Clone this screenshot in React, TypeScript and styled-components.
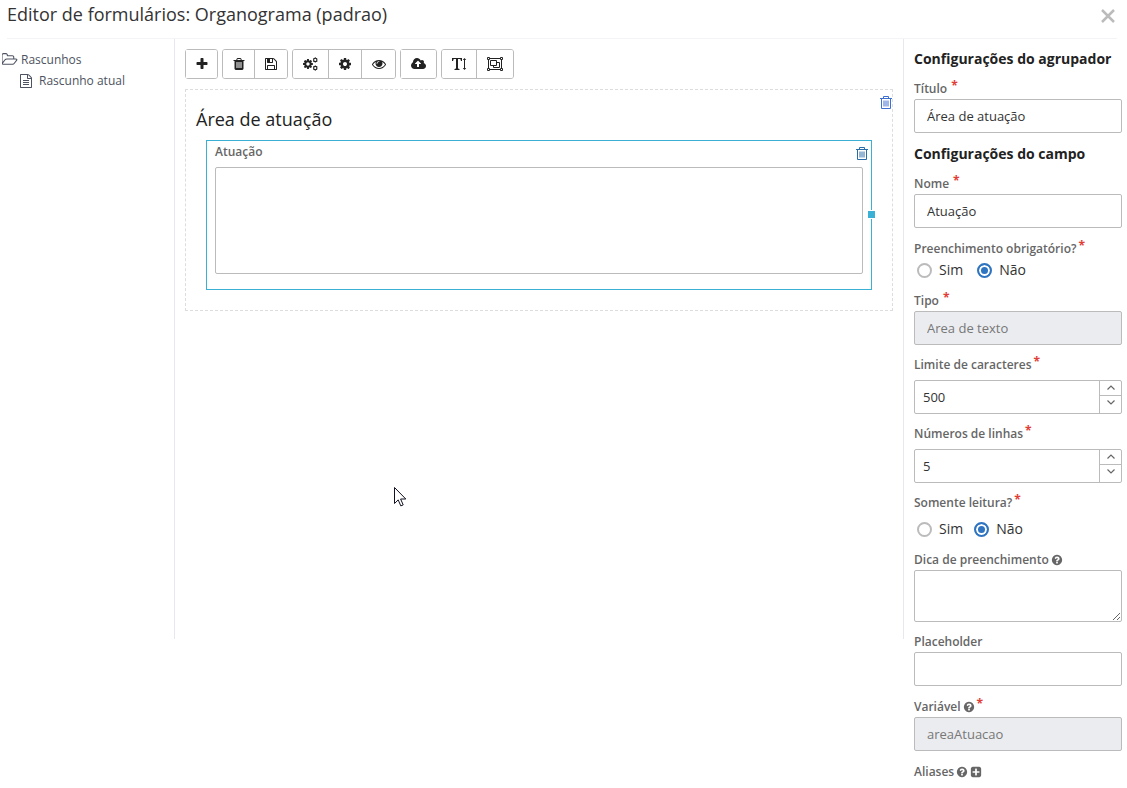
import React from "react";
import styled, { createGlobalStyle, css } from "styled-components";

const colors = {
  text: "#333",
  strong: "#222",
  muted: "#666",
  tree: "#4d5360",
  line: "#e6e7ef",
  control: "#bbb",
  accent: "#3ab0d5",
  blue: "#2f74c0",
  required: "#e03e36",
};

const GlobalStyle = createGlobalStyle`
  * { box-sizing: border-box; }
  body {
    margin: 0;
    background: #fff;
    color: ${colors.text};
    font-family: "Open Sans", "Noto Sans", sans-serif;
    font-size: 14px;
  }
  button, input, textarea { font: inherit; color: inherit; }
`;

/* ---------- icons ---------- */

const Svg = styled.svg`
  display: block;
  flex: none;
  fill: currentColor;
`;

const paths = {
  plus: "M1600 736v192q0 40-28 68t-68 28h-416v416q0 40-28 68t-68 28h-192q-40 0-68-28t-28-68v-416h-416q-40 0-68-28t-28-68v-192q0-40 28-68t68-28h416v-416q0-40 28-68t68-28h192q40 0 68 28t28 68v416h416q40 0 68 28t28 68z",
  trash:
    "M704 1376v-704q0-14-9-23t-23-9h-64q-14 0-23 9t-9 23v704q0 14 9 23t23 9h64q14 0 23-9t9-23zm256 0v-704q0-14-9-23t-23-9h-64q-14 0-23 9t-9 23v704q0 14 9 23t23 9h64q14 0 23-9t9-23zm256 0v-704q0-14-9-23t-23-9h-64q-14 0-23 9t-9 23v704q0 14 9 23t23 9h64q14 0 23-9t9-23zm-544-992h448l-48-117q-7-9-17-11h-317q-10 2-17 11zm928 32v64q0 14-9 23t-23 9h-96v948q0 83-47 143.500t-113 60.500h-832q-66 0-113-58.500t-47-141.500v-952h-96q-14 0-23-9t-9-23v-64q0-14 9-23t23-9h309l70-167q15-37 54-63t79-26h320q40 0 79 26t54 63l70 167h309q14 0 23 9t9 23z",
  save: "M512 1536h768v-384h-768v384zm896 0h128v-896q0-14-10-38.500t-20-34.500l-281-281q-10-10-34-20t-39-10v416q0 40-28 68t-68 28h-576q-40 0-68-28t-28-68v-416h-128v1280h128v-416q0-40 28-68t68-28h832q40 0 68 28t28 68v416zm-384-928v-320q0-13-9.500-22.500t-22.500-9.500h-192q-13 0-22.500 9.500t-9.500 22.500v320q0 13 9.500 22.500t22.500 9.500h192q13 0 22.500-9.500t9.500-22.500zm640 32v928q0 40-28 68t-68 28h-1344q-40 0-68-28t-28-68v-1344q0-40 28-68t68-28h928q40 0 88 20t76 48l280 280q28 28 48 76t20 88z",
  cog: "M1152 896q0-106-75-181t-181-75-181 75-75 181 75 181 181 75 181-75 75-181zm512-109v222q0 12-8 23t-20 13l-185 28q-19 54-39 91 35 50 107 138 10 12 10 25t-9 23q-27 37-99 108t-94 71q-12 0-26-9l-138-108q-44 23-91 38-16 136-29 186-7 28-36 28h-222q-14 0-24.500-8.500t-11.500-21.500l-28-184q-49-16-90-37l-141 107q-10 9-25 9-14 0-25-11-126-114-165-168-7-10-7-23 0-12 8-23 15-21 51-66.500t54-70.500q-27-50-41-99l-183-27q-13-2-21-12.500t-8-23.500v-222q0-12 8-23t19-13l186-28q14-46 39-92-40-57-107-138-10-12-10-24 0-10 9-23 26-36 98.500-107.500t94.500-71.500q13 0 26 10l138 107q44-23 91-38 16-136 29-186 7-28 36-28h222q14 0 24.500 8.500t11.500 21.500l28 184q49 16 90 37l142-107q9-9 24-9 13 0 25 10 129 119 165 170 7 8 7 22 0 12-8 23-15 21-51 66.500t-54 70.500q26 50 41 98l183 28q13 2 21 12.500t8 23.500z",
  eye: "M1664 960q-152-236-381-353 61 104 61 225 0 185-131.500 316.500t-316.500 131.500-316.500-131.500-131.500-316.500q0-121 61-225-229 117-381 353 133 205 333.500 326.500t434.500 121.500 434.500-121.500 333.500-326.500zm-720-384q0-20-14-34t-34-14q-125 0-214.500 89.500t-89.500 214.500q0 20 14 34t34 14 34-14 14-34q0-86 61-147t147-61q20 0 34-14t14-34zm848 384q0 34-20 69-140 230-376.500 368.500t-499.500 138.500-499.500-139-376.500-368q-20-35-20-69t20-69q140-229 376.500-368t499.500-139 499.500 139 376.500 368q20 35 20 69z",
  cloud:
    "M1280 864q0-14-9-23l-352-352q-9-9-23-9t-23 9l-351 351q-10 12-10 24 0 14 9 23t23 9h224v352q0 13 9.500 22.500t22.500 9.500h192q13 0 22.500-9.500t9.500-22.500v-352h224q13 0 22.500-9.500t9.500-22.500zm640 288q0 159-112.500 271.500t-271.500 112.500h-1088q-185 0-316.500-131.500t-131.500-316.500q0-130 70-240t188-165q-2-30-2-43 0-212 150-362t362-150q156 0 285.500 87t188.500 231q71-62 166-62 106 0 181 75t75 181q0 76-41 138 130 31 213.500 135.500t83.500 238.500z",
  question:
    "M1024 1376v-192q0-14-9-23t-23-9h-192q-14 0-23 9t-9 23v192q0 14 9 23t23 9h192q14 0 23-9t9-23zm256-672q0-88-55.500-163t-138.500-116-170-41q-243 0-371 213-15 24 8 42l132 100q7 6 19 6 16 0 25-12 53-68 86-92 34-24 86-24 48 0 85.500 26t37.500 59q0 38-20 61t-68 45q-63 28-115.500 86.500t-52.500 125.500v36q0 14 9 23t23 9h192q14 0 23-9t9-23q0-19 21.500-49.500t54.500-49.500q32-18 49-28.500t46-35 44.500-48 28-60.500 12.500-81zm384 192q0 209-103 385.500t-279.500 279.500-385.500 103-385.500-103-279.500-279.500-103-385.500 103-385.500 279.500-279.500 385.500-103 385.500 103 279.500 279.500 103 385.500z",
  plusSquare:
    "M1408 960v-128q0-26-19-45t-45-19h-320v-320q0-26-19-45t-45-19h-128q-26 0-45 19t-19 45v320h-320q-26 0-45 19t-19 45v128q0 26 19 45t45 19h320v320q0 26 19 45t45 19h128q26 0 45-19t19-45v-320h320q26 0 45-19t19-45zm256-544v960q0 119-84.500 203.500t-203.500 84.500h-960q-119 0-203.500-84.500t-84.500-203.500v-960q0-119 84.500-203.500t203.500-84.500h960q119 0 203.500 84.500t84.500 203.500z",
  folder:
    "M1717 931q0-35-53-35h-1088q-40 0-85.500 21.500t-71.500 52.500l-294 363q-18 24-18 40 0 35 53 35h1088q40 0 86-22t71-53l294-363q18-22 18-39zm-1141-163h768v-160q0-40-28-68t-68-28h-576q-40 0-68-28t-28-68v-64q0-40-28-68t-68-28h-320q-40 0-68 28t-28 68v853l256-315q44-53 116-87.500t140-34.500zm1269 163q0 62-46 120l-295 363q-43 53-116 87.500t-140 34.500h-1088q-92 0-158-66t-66-158v-960q0-92 66-158t158-66h320q92 0 158 66t66 158v32h544q92 0 158 66t66 158v160h192q54 0 99 24.500t67 70.500q15 32 15 68z",
  file: "M1596 380q28 28 48 76t20 88v1152q0 40-28 68t-68 28h-1344q-40 0-68-28t-28-68v-1600q0-40 28-68t68-28h896q40 0 88 20t76 48zm-444-244v376h376q-10-29-22-41l-313-313q-12-12-41-22zm384 1528v-1024h-416q-40 0-68-28t-28-68v-416h-768v1536h1280zm-1024-864q0-14 9-23t23-9h704q14 0 23 9t9 23v64q0 14-9 23t-23 9h-704q-14 0-23-9t-9-23v-64zm736 224q14 0 23 9t9 23v64q0 14-9 23t-23 9h-704q-14 0-23-9t-9-23v-64q0-14 9-23t23-9h704zm0 256q14 0 23 9t9 23v64q0 14-9 23t-23 9h-704q-14 0-23-9t-9-23v-64q0-14 9-23t23-9h704z",
};

type IconName = keyof typeof paths;

function Icon({ name, size = 14, wide = false }: { name: IconName; size?: number; wide?: boolean }) {
  return (
    <Svg
      width={wide ? size + 1 : size}
      height={size}
      viewBox={wide ? "0 0 1920 1792" : "0 0 1792 1792"}
      aria-hidden="true"
    >
      <path d={paths[name]} />
    </Svg>
  );
}

function CogsIcon() {
  return (
    <Svg width="15" height="14" viewBox="0 0 1920 1792" aria-hidden="true">
      <path d={paths.cog} transform="translate(-100 160) scale(.82)" />
      <g fill="none" stroke="currentColor" strokeWidth="150">
        <circle cx="1570" cy="370" r="215" />
        <circle cx="1570" cy="1420" r="215" />
      </g>
      <g fill="none" stroke="currentColor" strokeWidth="120">
        <path d="M1570 40v130M1570 570v130M1350 150l80 80M1790 150l-80 80M1350 590l80-80M1790 590l-80-80" />
        <path d="M1570 1090v130M1570 1620v130M1350 1200l80 80M1790 1200l-80 80M1350 1640l80-80M1790 1640l-80-80" />
      </g>
    </Svg>
  );
}

function TextHeightIcon() {
  return (
    <Svg width="15" height="14" viewBox="0 0 15 14" aria-hidden="true">
      <path d="M0 1h10v3h-1L8.300 2H6v9.500l1.500.5v1H2.500v-1l1.500-.5V2H1.700L1 4H0z" />
      <path d="M12.500 1l1.700 2H13v8h1.200l-1.700 2-1.700-2H12V3h-1.200z" />
    </Svg>
  );
}

function ObjectGroupIcon() {
  return (
    <Svg width="16" height="14" viewBox="0 0 16 14" aria-hidden="true">
      <g fill="none" stroke="currentColor">
        <path d="M2.500 1.500h11M2.500 12.500h11M1.500 2.500v9M14.500 2.500v9" />
        <path d="M.5.500h2v2h-2zM13.500.500h2v2h-2zM.5 11.500h2v2h-2zM13.500 11.500h2v2h-2z" />
        <path d="M3.500 3.500h6v5h-6z" />
        <path d="M9.500 5.500h3v5h-6v-2" />
      </g>
    </Svg>
  );
}

function BinIcon() {
  return (
    <Svg width="12" height="13" viewBox="0 0 12 13" aria-hidden="true">
      <g fill="none" stroke="currentColor">
        <path d="M0 2.500h12M3.500 2V.5h5V2" />
        <path d="M1.500 3v9.500h9V3" />
        <path d="M4 4.500v6M6 4.500v6M8 4.500v6" />
      </g>
    </Svg>
  );
}

function CloseIcon() {
  return (
    <Svg width="14" height="14" viewBox="0 0 14 14" aria-hidden="true">
      <path d="M1 1l12 12M13 1L1 13" fill="none" stroke="currentColor" strokeWidth="2.500" />
    </Svg>
  );
}

function Chevron({ down = false }: { down?: boolean }) {
  return (
    <Svg width="8" height="5" viewBox="0 0 8 5" aria-hidden="true">
      <path
        d={down ? "M.5.500L4 4L7.500.5" : "M.5 4.500L4 1L7.500 4.500"}
        fill="none"
        stroke="currentColor"
        strokeWidth="1.200"
      />
    </Svg>
  );
}

/* ---------- page frame ---------- */

const Header = styled.header`
  display: flex;
  justify-content: space-between;
  align-items: flex-start;
  height: 39px;
  margin: 0 10px 0 7px;
  border-bottom: 1px solid #f3f3f8;
`;

const PageTitle = styled.h1`
  margin: 0;
  font-size: 18px;
  font-weight: 400;
  line-height: 28px;
`;

const PlainButton = styled.button`
  display: block;
  padding: 0;
  border: 0;
  background: none;
  cursor: pointer;
`;

const CloseButton = styled(PlainButton)`
  margin-top: 9px;
  margin-right: 2px;
  color: ${colors.control};
`;

const Columns = styled.div`
  display: grid;
  grid-template-columns: 174px minmax(0, 1fr) 223px;
  align-items: start;
`;

const Tree = styled.nav`
  padding: 10px 2px;
  color: ${colors.tree};
`;

const TreeLink = styled.a<{ $child?: boolean }>`
  display: flex;
  align-items: center;
  gap: ${(p) => (p.$child ? 6 : 3)}px;
  height: 21px;
  padding-left: ${(p) => (p.$child ? 17 : 0)}px;
  color: inherit;
  font-size: 12px;
  text-decoration: none;
`;

const Canvas = styled.main`
  position: relative;
  min-height: 600px;
  padding: 10px;
  border: solid ${colors.line};
  border-width: 0 1px;
`;

const Pointer = styled.svg`
  position: absolute;
  top: 448px;
  left: 219px;
`;

/* ---------- toolbar ---------- */

const Toolbar = styled.div`
  display: flex;
  gap: 4px;
`;

const ButtonGroup = styled.div`
  display: flex;
  border: 1px solid ${colors.control};
  border-radius: 3px;
`;

const ToolButton = styled.button<{ $width: number }>`
  display: flex;
  align-items: center;
  justify-content: center;
  width: ${(p) => p.$width}px;
  height: 28px;
  padding: 0 0 1px;
  border: 0;
  background: #fff;
  color: ${colors.strong};
  cursor: pointer;

  & + & {
    border-left: 1px solid ${colors.control};
  }
  &:first-child { border-radius: 2px 0 0 2px; }
  &:last-child { border-radius: 0 2px 2px 0; }
`;

/* ---------- form preview ---------- */

const Group = styled.section`
  position: relative;
  margin-top: 10px;
  padding: 15px 10px 20px;
  border: 1px dashed #ddd;
`;

const GroupTitle = styled.h2`
  margin: 0 0 7px;
  font-size: 18px;
  font-weight: 400;
  line-height: 28px;
  color: ${colors.strong};
`;

const FieldBox = styled.div`
  position: relative;
  margin: 0 10px;
  padding: 0 8px 15px;
  border: 1px solid ${colors.accent};
`;

const RemoveButton = styled(PlainButton)<{ $inset?: boolean }>`
  position: absolute;
  top: 6px;
  right: ${(p) => (p.$inset ? 3 : 0)}px;
  color: ${(p) => (p.$inset ? "#2a6ca8" : "#3f6fd0")};
`;

const Handle = styled.span`
  position: absolute;
  top: 69px;
  right: -5px;
  width: 9px;
  height: 9px;
  border: 1px solid #fff;
  background: ${colors.accent};
`;

const label = css`
  font-size: 12px;
  font-weight: 600;
  color: ${colors.muted};
`;

const PreviewLabel = styled.label`
  ${label}
  display: block;
  height: 26px;
  line-height: 22px;
`;

const inputStyle = css`
  display: block;
  width: 100%;
  border: 1px solid ${colors.control};
  border-radius: 2px;
  background: #fff;
  outline: none;
`;

const PreviewArea = styled.textarea`
  ${inputStyle}
  height: 107px;
  resize: none;
`;

/* ---------- settings panel ---------- */

const Settings = styled.aside`
  display: flex;
  flex-direction: column;
  gap: 10px;
  padding: 10px 5px 0 10px;
`;

const SettingsTitle = styled.h3`
  margin: 0;
  font-size: 14px;
  font-weight: 700;
  line-height: 20px;
  color: ${colors.strong};
`;

const FieldGroup = styled.div<{ $loose?: boolean }>`
  display: flex;
  flex-direction: column;
  gap: ${(p) => (p.$loose ? 5 : 0)}px;
`;

const TextFieldGroup = styled(FieldGroup)`
  padding-bottom: 1px;
`;

const LabelRow = styled.div<{ $tight?: boolean }>`
  ${label}
  display: flex;
  align-items: center;
  gap: ${(p) => (p.$tight ? 2 : 4)}px;
  height: 20px;
  line-height: 20px;
`;

const Required = styled.span`
  padding-bottom: 6px;
  color: ${colors.required};
  font-size: 12px;
  font-weight: 700;
  line-height: 14px;
`;

const TextInput = styled.input`
  ${inputStyle}
  height: 34px;
  padding: 0 12px;
  font-size: 13px;

  &:disabled {
    background: #ebecf0;
    color: #777;
  }
`;

const HintArea = styled.textarea`
  ${inputStyle}
  height: 52px;
  resize: vertical;
`;

const Spinner = styled.div`
  ${inputStyle}
  display: flex;
  height: 34px;
`;

const NumberInput = styled.input`
  flex: 1;
  min-width: 0;
  padding: 0 8px;
  border: 0;
  background: none;
  font-size: 13px;
  outline: none;
  appearance: textfield;

  &::-webkit-inner-spin-button { appearance: none; }
`;

const Steps = styled.div`
  display: flex;
  flex-direction: column;
  width: 22px;
  border-left: 1px solid ${colors.control};
`;

const StepButton = styled(PlainButton)`
  display: flex;
  flex: 1;
  align-items: center;
  justify-content: center;
  padding-bottom: 1px;
  color: ${colors.muted};

  & + & {
    padding-bottom: 4px;
    border-top: 1px solid ${colors.control};
  }
`;

const RadioRow = styled.div<{ $compact?: boolean }>`
  display: flex;
  align-items: center;
  gap: ${(p) => (p.$compact ? 11 : 14)}px;
  height: 22px;
  padding-left: 3px;
`;

const RadioLabel = styled.label`
  display: flex;
  align-items: center;
  gap: 7px;
  line-height: 20px;
`;

const Radio = styled.input`
  width: 15px;
  height: 15px;
  margin: 0;
  border: 2px solid ${colors.control};
  border-radius: 50%;
  appearance: none;

  &:checked {
    border-color: ${colors.blue};
    background: ${colors.blue};
    box-shadow: inset 0 0 0 2px #fff;
  }
`;

type TextFieldProps = { id: string; text: string; value?: string; required?: boolean; disabled?: boolean; help?: boolean };

function TextField({ id, text, value = "", required, disabled, help }: TextFieldProps) {
  const Wrapper = disabled && !help ? FieldGroup : TextFieldGroup;
  return (
    <Wrapper>
      <LabelRow $tight={help}>
        <label htmlFor={id}>{text}</label>
        {help && <Icon name="question" size={12} />}
        {required && <Required>*</Required>}
      </LabelRow>
      <TextInput id={id} defaultValue={value} disabled={disabled} />
    </Wrapper>
  );
}

function NumberField({ id, text, value }: { id: string; text: string; value: number }) {
  return (
    <FieldGroup $loose>
      <LabelRow $tight>
        <label htmlFor={id}>{text}</label>
        <Required>*</Required>
      </LabelRow>
      <Spinner>
        <NumberInput id={id} type="number" defaultValue={value} />
        <Steps>
          <StepButton type="button" aria-label="Aumentar">
            <Chevron />
          </StepButton>
          <StepButton type="button" aria-label="Diminuir">
            <Chevron down />
          </StepButton>
        </Steps>
      </Spinner>
    </FieldGroup>
  );
}

function YesNoField({ name, text, loose }: { name: string; text: string; loose?: boolean }) {
  return (
    <FieldGroup $loose={loose} role="radiogroup" aria-labelledby={`${name}-label`}>
      <LabelRow $tight>
        <span id={`${name}-label`}>{text}</span>
        <Required>*</Required>
      </LabelRow>
      <RadioRow $compact={loose}>
        <RadioLabel>
          <Radio type="radio" name={name} />
          Sim
        </RadioLabel>
        <RadioLabel>
          <Radio type="radio" name={name} defaultChecked />
          Não
        </RadioLabel>
      </RadioRow>
    </FieldGroup>
  );
}

export default function App() {
  return (
    <>
      <GlobalStyle />
      <Header>
        <PageTitle>Editor de formulários: Organograma (padrao)</PageTitle>
        <CloseButton type="button" aria-label="Fechar">
          <CloseIcon />
        </CloseButton>
      </Header>
      <Columns>
        <Tree>
          <TreeLink href="#rascunhos">
            <Icon name="folder" size={15} wide />
            Rascunhos
          </TreeLink>
          <TreeLink href="#atual" $child>
            <Icon name="file" />
            Rascunho atual
          </TreeLink>
        </Tree>

        <Canvas>
          <Toolbar>
            <ButtonGroup>
              <ToolButton $width={31} aria-label="Adicionar"><Icon name="plus" /></ToolButton>
            </ButtonGroup>
            <ButtonGroup>
              <ToolButton $width={31} aria-label="Excluir"><Icon name="trash" /></ToolButton>
              <ToolButton $width={33} aria-label="Salvar"><Icon name="save" /></ToolButton>
            </ButtonGroup>
            <ButtonGroup>
              <ToolButton $width={35} aria-label="Configurações"><CogsIcon /></ToolButton>
              <ToolButton $width={33} aria-label="Opções"><Icon name="cog" /></ToolButton>
              <ToolButton $width={34} aria-label="Visualizar"><Icon name="eye" /></ToolButton>
            </ButtonGroup>
            <ButtonGroup>
              <ToolButton $width={35} aria-label="Publicar"><Icon name="cloud" wide /></ToolButton>
            </ButtonGroup>
            <ButtonGroup>
              <ToolButton $width={34} aria-label="Texto"><TextHeightIcon /></ToolButton>
              <ToolButton $width={37} aria-label="Agrupador"><ObjectGroupIcon /></ToolButton>
            </ButtonGroup>
          </Toolbar>

          <Group>
            <GroupTitle>Área de atuação</GroupTitle>
            <RemoveButton type="button" aria-label="Remover agrupador"><BinIcon /></RemoveButton>
            <FieldBox>
              <PreviewLabel htmlFor="preview">Atuação</PreviewLabel>
              <PreviewArea id="preview" />
              <RemoveButton type="button" aria-label="Remover campo" $inset><BinIcon /></RemoveButton>
              <Handle />
            </FieldBox>
          </Group>

          <Pointer width="13" height="20" viewBox="0 0 13 20" aria-hidden="true">
            <path
              d="M.5.500v16l3.700-3.600 2.600 6 2.400-1-2.600-5.900h5.200z"
              fill="#fff"
              stroke="#112"
              strokeLinejoin="round"
            />
          </Pointer>
        </Canvas>

        <Settings>
          <SettingsTitle>Configurações do agrupador</SettingsTitle>
          <TextField id="titulo" text="Título" value="Área de atuação" required />
          <SettingsTitle>Configurações do campo</SettingsTitle>
          <TextField id="nome" text="Nome" value="Atuação" required />
          <YesNoField name="obrigatorio" text="Preenchimento obrigatório?" />
          <TextField id="tipo" text="Tipo" value="Area de texto" required disabled />
          <NumberField id="limite" text="Limite de caracteres" value={500} />
          <NumberField id="linhas" text="Números de linhas" value={5} />
          <YesNoField name="leitura" text="Somente leitura?" loose />
          <FieldGroup>
            <LabelRow $tight>
              <label htmlFor="dica">Dica de preenchimento</label>
              <Icon name="question" size={12} />
            </LabelRow>
            <HintArea id="dica" />
          </FieldGroup>
          <TextField id="placeholder" text="Placeholder" />
          <TextField id="variavel" text="Variável" value="areaAtuacao" required disabled help />
          <LabelRow $tight>
            Aliases
            <Icon name="question" size={12} />
            <PlainButton type="button" aria-label="Adicionar alias">
              <Icon name="plusSquare" size={12} />
            </PlainButton>
          </LabelRow>
        </Settings>
      </Columns>
    </>
  );
}
